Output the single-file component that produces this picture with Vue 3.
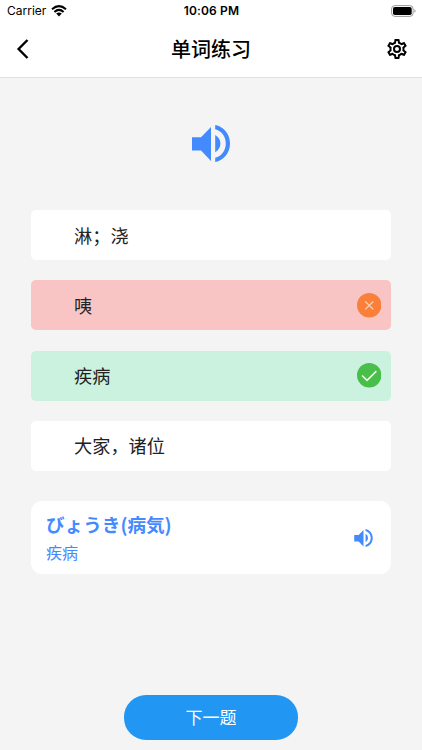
<script setup>
const options = [
  { text: '淋；浇', state: '' },
  { text: '咦', state: 'wrong' },
  { text: '疾病', state: 'right' },
  { text: '大家，诸位', state: '' },
]
</script>

<template>
  <div class="screen">
    <header class="top">
      <div class="status">
        <div class="carrier">
          <span>Carrier</span>
          <svg class="wifi" viewBox="0 0 16 12">
            <path d="M1 4.3Q8-2 15 4.3M3.4 6.9Q8 2.8 12.6 6.9" fill="none" stroke="#000" stroke-width="2" />
            <path d="M5.2 8.6Q8 6.3 10.8 8.6L8 11.5Z" />
          </svg>
        </div>
        <span class="time">10:06 PM</span>
        <div class="battery-side">
          <svg class="battery" viewBox="0 0 25 12">
            <rect x=".6" y=".6" width="21.5" height="10.8" rx="3.2" fill="#fff" stroke="#999" />
            <rect x="2" y="2" width="18.7" height="8" rx="1.8" />
            <path d="M23.4 4.2q1.2.5 1.2 1.8t-1.2 1.8z" fill="#999" />
          </svg>
        </div>
      </div>
      <nav class="nav">
        <svg class="back" viewBox="0 0 14 22"><path d="M12.5 2 3.6 11 12.5 20" fill="none" stroke="#000" stroke-width="2.4" /></svg>
        <h1>单词练习</h1>
        <svg class="gear" viewBox="2 2 20 20">
          <path d="M19.43 12.98c.04-.32.07-.64.07-.98s-.03-.66-.07-.98l2.11-1.65c.19-.15.24-.42.12-.64l-2-3.46a.5.5 0 0 0-.61-.22l-2.49 1c-.52-.4-1.08-.73-1.69-.98l-.38-2.65A.49.49 0 0 0 14 2h-4c-.25 0-.46.18-.49.42l-.38 2.65c-.61.25-1.17.59-1.69.98l-2.49-1a.5.5 0 0 0-.61.22l-2 3.46c-.13.22-.07.49.12.64l2.11 1.65c-.04.32-.07.65-.07.98s.03.66.07.98l-2.11 1.65c-.19.15-.24.42-.12.64l2 3.46c.12.22.39.3.61.22l2.49-1c.52.4 1.08.73 1.69.98l.38 2.65c.03.24.24.42.49.42h4c.25 0 .46-.18.49-.42l.38-2.65c.61-.25 1.17-.59 1.69-.98l2.49 1c.23.09.49 0 .61-.22l2-3.46c.12-.22.07-.49-.12-.64l-2.11-1.65zm-1.98-1.71c.04.31.05.52.05.73s-.02.43-.05.73l-.14 1.13.89.7 1.08.84-.7 1.21-1.27-.51-1.04-.42-.9.68c-.43.32-.84.56-1.25.73l-1.06.43-.16 1.13-.2 1.35h-1.4l-.35-2.48-1.06-.43c-.43-.18-.83-.41-1.23-.71l-.91-.7-1.06.43-1.27.51-.7-1.21 1.08-.84.89-.7-.14-1.13c-.03-.31-.05-.54-.05-.74s.02-.43.05-.73l.14-1.13-.89-.7-1.08-.84.7-1.21 1.27.51 1.04.42.9-.68c.43-.32.84-.56 1.25-.73l1.06-.43.16-1.13.2-1.35h1.39l.35 2.48 1.06.43c.43.18.83.41 1.23.71l.91.7 1.06-.43 1.27-.51.7 1.21-1.07.85-.89.7.14 1.13zM12 8a4 4 0 1 0 0 8 4 4 0 0 0 0-8zm0 6a2 2 0 1 1 0-4 2 2 0 0 1 0 4z" />
        </svg>
      </nav>
    </header>

    <main>
      <svg class="sound big" viewBox="0 0 38 37">
        <path d="M0 12.3h9L19 2v34L9 25.5H0zM23.2 10q5.2 3 5.2 8.6t-5.2 8.6zM23.2 0C31.5 1.6 38 8.8 38 18.5S31.5 35.4 23.2 37v-4.2c6.2-1.6 10.6-7.2 10.6-14.3S29.4 5.8 23.2 4.2z" />
      </svg>

      <ul class="options">
        <li v-for="option in options" :key="option.text" :class="['option', option.state]">
          <span class="label">{{ option.text }}</span>
          <svg v-if="option.state" class="mark" viewBox="0 0 24 24">
            <circle cx="12" cy="12" r="12" />
            <path v-if="option.state === 'wrong'" d="m8.1 8.3 7.8 7.8m0-7.8-7.8 7.8" />
            <path v-else d="m5 12.2 4.8 4.8L19 8" />
          </svg>
        </li>
      </ul>

      <section class="answer">
        <div class="entry">
          <div class="word">びょうき(病気)</div>
          <div class="meaning">疾病</div>
        </div>
        <svg class="sound small" viewBox="0 0 38 37">
          <path d="M0 12.3h9L19 2v34L9 25.5H0zM23.2 10q5.2 3 5.2 8.6t-5.2 8.6zM23.2 0C31.5 1.6 38 8.8 38 18.5S31.5 35.4 23.2 37v-4.2c6.2-1.6 10.6-7.2 10.6-14.3S29.4 5.8 23.2 4.2z" />
        </svg>
      </section>
    </main>

    <button class="next">下一题</button>
  </div>
</template>

<style>
body {
  background: #f4f4f4;
}
</style>

<style scoped>
.screen {
  box-sizing: border-box;
  height: 750px;
  display: flex;
  flex-direction: column;
  background: #f4f4f4;
  color: #222;
  font-family: Inter, "Noto Sans CJK SC", sans-serif;
}
.top {
  box-sizing: border-box;
  height: 78px;
  background: #fff;
  border-bottom: 1.5px solid #e0e0e0;
  color: #000;
}
.status {
  display: grid;
  grid-template-columns: 1fr auto 1fr;
  align-items: center;
  height: 21px;
  padding: 0 6px 0 7px;
  font-size: 12px;
  line-height: 15px;
}
.carrier {
  display: flex;
  align-items: center;
  gap: 5px;
}
.wifi {
  width: 16px;
  height: 12px;
}
.time {
  font-weight: 600;
  letter-spacing: 0.15px;
}
.battery-side {
  display: flex;
  justify-content: flex-end;
}
.battery {
  width: 25px;
  height: 12px;
}
.nav {
  display: grid;
  grid-template-columns: 1fr auto 1fr;
  align-items: center;
  height: 56px;
  padding: 0 15px;
}
.back {
  width: 14px;
  height: 22px;
}
h1 {
  margin: 0;
  padding-top: 2px;
  font-size: 20px;
  line-height: 28px;
  font-weight: 500;
}
.gear {
  justify-self: end;
  width: 20px;
  height: 20px;
}
main {
  display: flex;
  flex-direction: column;
  padding: 47px 31px 0;
}
.sound {
  fill: #448aff;
}
.big {
  width: 38px;
  height: 37px;
  align-self: center;
}
.options {
  display: flex;
  flex-direction: column;
  gap: 20.3px;
  margin: 48px 0 0;
  padding: 0;
  list-style: none;
}
.option {
  display: flex;
  align-items: center;
  justify-content: space-between;
  height: 50px;
  padding: 0 10px 0 43px;
  border-radius: 5px;
  background: #fff;
  font-size: 18.2px;
  line-height: 26px;
}
.label {
  padding-top: 1px;
}
.wrong {
  background: #f8c4c4;
}
.right {
  background: #cbf2df;
}
.mark {
  width: 24.5px;
  height: 24.5px;
}
.mark path {
  fill: none;
  stroke: #e8ffe6;
  stroke-width: 1.5;
}
.wrong .mark path {
  stroke: #ffd0b8;
  stroke-width: 1.2;
}
.right circle {
  fill: #4abe4b;
}
.wrong circle {
  fill: #fa8039;
}
.answer {
  box-sizing: border-box;
  display: flex;
  align-items: center;
  justify-content: space-between;
  height: 73px;
  margin-top: 30px;
  padding: 1px 18px 0 15px;
  border-radius: 11px;
  background: #fff;
  color: #448aff;
}
.word {
  font-family: "Noto Sans CJK JP", sans-serif;
  font-size: 18.6px;
  line-height: 30px;
  font-weight: 700;
}
.meaning {
  font-size: 16px;
  line-height: 28px;
}
.small {
  width: 19px;
  height: 18px;
}
.next {
  align-self: center;
  width: 174px;
  height: 45px;
  margin: auto 0 10px;
  padding: 0 0 2px;
  border: 0;
  border-radius: 22px;
  background: #2196f3;
  color: #fff;
  font: 400 17px/43px "Noto Sans CJK SC", sans-serif;
}
</style>
